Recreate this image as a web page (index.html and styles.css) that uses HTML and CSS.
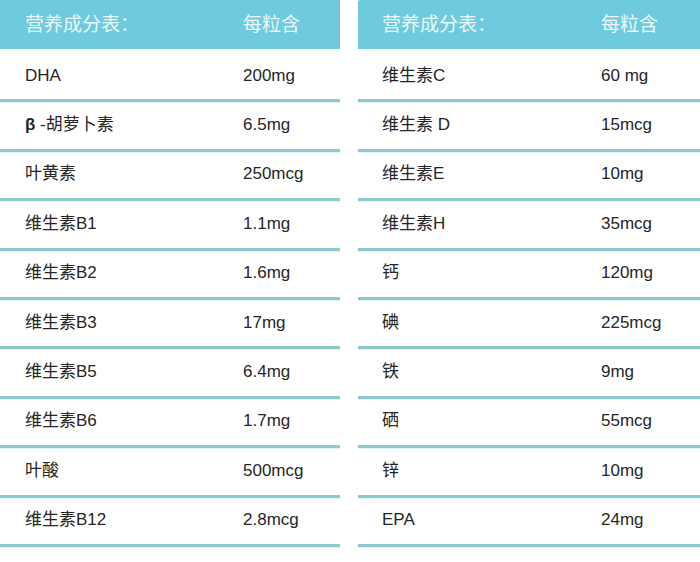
FILE: index.html
```html
<!DOCTYPE html>
<html lang="zh">
<head>
<meta charset="utf-8">
<link rel="stylesheet" href="styles.css">
</head>
<body>
<div class="page">
  <section class="table">
    <div class="head"><span class="label">营养成分表：</span><span class="value">每粒含</span></div>
    <div class="row"><span class="label">DHA</span><span class="value">200mg</span></div>
    <div class="row"><span class="label"><b class="beta">β</b> -胡萝卜素</span><span class="value">6.5mg</span></div>
    <div class="row"><span class="label">叶黄素</span><span class="value">250mcg</span></div>
    <div class="row"><span class="label">维生素B1</span><span class="value">1.1mg</span></div>
    <div class="row"><span class="label">维生素B2</span><span class="value">1.6mg</span></div>
    <div class="row"><span class="label">维生素B3</span><span class="value">17mg</span></div>
    <div class="row"><span class="label">维生素B5</span><span class="value">6.4mg</span></div>
    <div class="row"><span class="label">维生素B6</span><span class="value">1.7mg</span></div>
    <div class="row"><span class="label">叶酸</span><span class="value">500mcg</span></div>
    <div class="row"><span class="label">维生素B12</span><span class="value">2.8mcg</span></div>
  </section>
  <section class="table right">
    <div class="head"><span class="label">营养成分表：</span><span class="value">每粒含</span></div>
    <div class="row"><span class="label">维生素C</span><span class="value">60 mg</span></div>
    <div class="row"><span class="label">维生素 D</span><span class="value">15mcg</span></div>
    <div class="row"><span class="label">维生素E</span><span class="value">10mg</span></div>
    <div class="row"><span class="label">维生素H</span><span class="value">35mcg</span></div>
    <div class="row"><span class="label">钙</span><span class="value">120mg</span></div>
    <div class="row"><span class="label">碘</span><span class="value">225mcg</span></div>
    <div class="row"><span class="label">铁</span><span class="value">9mg</span></div>
    <div class="row"><span class="label">硒</span><span class="value">55mcg</span></div>
    <div class="row"><span class="label">锌</span><span class="value">10mg</span></div>
    <div class="row"><span class="label">EPA</span><span class="value">24mg</span></div>
  </section>
</div>
</body>
</html>
```
FILE: styles.css
```css
html, body {
  margin: 0;
  padding: 0;
  background: #ffffff;
}
body {
  font-family: "Liberation Sans", "Noto Sans CJK SC", sans-serif;
  color: #262626;
}
.page {
  display: flex;
  gap: 18px;
  width: 700px;
  height: 562px;
  overflow: hidden;
}
.table {
  width: 340px;
  display: flex;
  flex-direction: column;
}
.table.right {
  width: 342px;
}
.head {
  height: 49px;
  background: #6dcbdd;
  display: grid;
  grid-template-columns: 218px 1fr;
  align-items: center;
  padding-left: 25px;
  font-size: 19px;
  line-height: 24px;
  color: #eaf8fb;
  margin-bottom: 4px;
}
.right .head {
  border-top-left-radius: 2px;
  padding-left: 24px;
}
.row {
  height: 49.4px;
  box-sizing: border-box;
  display: grid;
  grid-template-columns: 218px 1fr;
  align-items: center;
  padding-left: 25px;
  padding-bottom: 1px;
  font-size: 17px;
  line-height: 22px;
  border-bottom: 3px solid #8fc9ce;
  box-shadow: 0 1px 0 #dff4f6;
}
.right .row {
  padding-left: 24px;
}
.right .value {
  padding-left: 1px;
}
.beta {
  font-weight: bold;
}
```
